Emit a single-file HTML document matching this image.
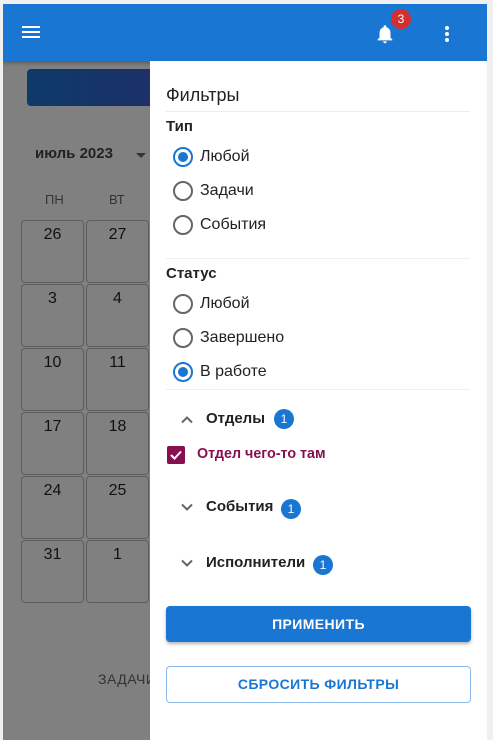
<!DOCTYPE html>
<html><head><meta charset="utf-8"><style>
*{box-sizing:border-box;margin:0;padding:0}
body{width:493px;height:740px;background:#f0f0f0;font-family:"Liberation Sans",Roboto,sans-serif;position:relative;overflow:hidden}
.app{position:absolute;left:3px;top:4px;width:484px;height:736px;background:#808080;overflow:hidden}
.bar{position:absolute;left:0;top:0;width:484px;height:57px;background:#1976d2;box-shadow:0 2px 4px rgba(0,0,0,.3)}
.abs{position:absolute}
.cell{position:absolute;width:63px;height:63px;border:1px solid #5e5e5e;border-radius:4px;text-align:center;padding-top:5px;font-size:16px;color:#111}
.panel{position:absolute;left:147px;top:57px;width:337px;height:679px;background:#fff}
.t{position:absolute;color:#222;font-size:16px}
.b{font-weight:bold;font-size:15px}
.radio{position:absolute;width:20px;height:20px;border:2px solid #666;border-radius:50%}
.radio.on{border-color:#1976d2}
.radio.on:after{content:"";position:absolute;left:3px;top:3px;width:10px;height:10px;border-radius:50%;background:#1976d2}
.div{position:absolute;left:16px;width:304px;height:1px;background:#eee}
.badge{position:absolute;width:20px;height:20px;border-radius:50%;background:#1976d2;color:#fff;font-size:12px;text-align:center;line-height:20px}
.chev{position:absolute}
</style></head><body>
<div class="app">
 <div class="abs" style="left:24px;top:65px;width:130px;height:37px;border-radius:4px;background:linear-gradient(90deg,#0d3a6a,#1d2f6a)"></div>
 <div class="abs" style="left:32px;top:141px;font-size:15px;font-weight:bold;color:#222">июль 2023</div>
 <div class="abs" style="left:133px;top:149px;border:5px solid transparent;border-top-color:#333"></div>
 <div class="abs" style="left:42px;top:188px;font-size:13px;color:#333">ПН</div>
 <div class="abs" style="left:106px;top:188px;font-size:13px;color:#333">ВТ</div>
 <div class="cell" style="left:18px;top:216px">26</div><div class="cell" style="left:83px;top:216px">27</div>
 <div class="cell" style="left:18px;top:280px">3</div><div class="cell" style="left:83px;top:280px">4</div>
 <div class="cell" style="left:18px;top:344px">10</div><div class="cell" style="left:83px;top:344px">11</div>
 <div class="cell" style="left:18px;top:408px">17</div><div class="cell" style="left:83px;top:408px">18</div>
 <div class="cell" style="left:18px;top:472px">24</div><div class="cell" style="left:83px;top:472px">25</div>
 <div class="cell" style="left:18px;top:536px">31</div><div class="cell" style="left:83px;top:536px">1</div>
 <div class="abs" style="left:95px;top:667px;font-size:14px;color:#333;letter-spacing:.5px">ЗАДАЧИ</div>
 <div class="bar">
  <div class="abs" style="left:19px;top:22px;width:18px;height:2px;background:#fff;box-shadow:0 5px 0 #fff,0 10px 0 #fff"></div>
  <svg class="abs" style="left:371px;top:18px" width="22" height="24" viewBox="0 0 24 24"><path fill="#fff" d="M12 22c1.1 0 2-.9 2-2h-4a2 2 0 0 0 2 2zm6-6v-5c0-3.1-1.6-5.6-4.5-6.3V4a1.5 1.5 0 0 0-3 0v.7C7.6 5.4 6 7.9 6 11v5l-2 2v1h16v-1l-2-2z"/></svg>
  <div class="abs" style="left:388px;top:5px;width:20px;height:20px;border-radius:50%;background:#d32f2f;color:#fff;font-size:12px;text-align:center;line-height:20px">3</div>
  <div class="abs" style="left:442px;top:22px;width:4px;height:4px;border-radius:50%;background:#fff;box-shadow:0 6px 0 #fff,0 12px 0 #fff"></div>
 </div>
 <div class="panel">
  <div class="t" style="left:16px;top:24px;font-size:18px">Фильтры</div>
  <div class="div" style="top:50px"></div>
  <div class="t b" style="left:16px;top:57px">Тип</div>
  <div class="radio on" style="left:23px;top:86px"></div><div class="t" style="left:50px;top:87px">Любой</div>
  <div class="radio" style="left:23px;top:120px"></div><div class="t" style="left:50px;top:121px">Задачи</div>
  <div class="radio" style="left:23px;top:154px"></div><div class="t" style="left:50px;top:155px">События</div>
  <div class="div" style="top:197px"></div>
  <div class="t b" style="left:16px;top:204px">Статус</div>
  <div class="radio" style="left:23px;top:233px"></div><div class="t" style="left:50px;top:234px">Любой</div>
  <div class="radio" style="left:23px;top:267px"></div><div class="t" style="left:50px;top:268px">Завершено</div>
  <div class="radio on" style="left:23px;top:301px"></div><div class="t" style="left:50px;top:302px">В работе</div>
  <div class="div" style="top:328px"></div>
  <svg class="chev" style="left:30px;top:354px" width="14" height="10" viewBox="0 0 14 10"><path d="M2 7.5l5-5 5 5" stroke="#666" stroke-width="2" fill="none"/></svg>
  <div class="t b" style="left:56px;top:349px">Отделы</div>
  <div class="badge" style="left:124px;top:348px">1</div>
  <div class="abs" style="left:17px;top:385px;width:18px;height:18px;border-radius:2px;background:#880e4f"></div>
  <svg class="abs" style="left:17px;top:385px" width="18" height="18" viewBox="0 0 18 18"><path d="M4 9l3.5 3.5L14 5.5" stroke="#fff" stroke-width="2" fill="none"/></svg>
  <div class="t" style="left:47px;top:385px;font-size:14.3px;font-weight:bold;color:#880e4f">Отдел чего-то там</div>
  <svg class="chev" style="left:30px;top:441px" width="14" height="10" viewBox="0 0 14 10"><path d="M2 2.5l5 5 5-5" stroke="#666" stroke-width="2" fill="none"/></svg>
  <div class="t b" style="left:56px;top:437px">События</div>
  <div class="badge" style="left:131px;top:438px">1</div>
  <svg class="chev" style="left:30px;top:497px" width="14" height="10" viewBox="0 0 14 10"><path d="M2 2.5l5 5 5-5" stroke="#666" stroke-width="2" fill="none"/></svg>
  <div class="t b" style="left:56px;top:493px">Исполнители</div>
  <div class="badge" style="left:163px;top:494px">1</div>
  <div class="abs" style="left:16px;top:545px;width:305px;height:36px;border-radius:4px;background:#1976d2;color:#fff;font-size:14px;font-weight:bold;text-align:center;line-height:36px;letter-spacing:.4px;box-shadow:0 2px 3px rgba(0,0,0,.3)">ПРИМЕНИТЬ</div>
  <div class="abs" style="left:16px;top:605px;width:305px;height:37px;border-radius:4px;border:1px solid #8bbbea;color:#1976d2;font-size:14px;font-weight:bold;text-align:center;line-height:35px;letter-spacing:.4px">СБРОСИТЬ ФИЛЬТРЫ</div>
 </div>
</div>
</body></html>
